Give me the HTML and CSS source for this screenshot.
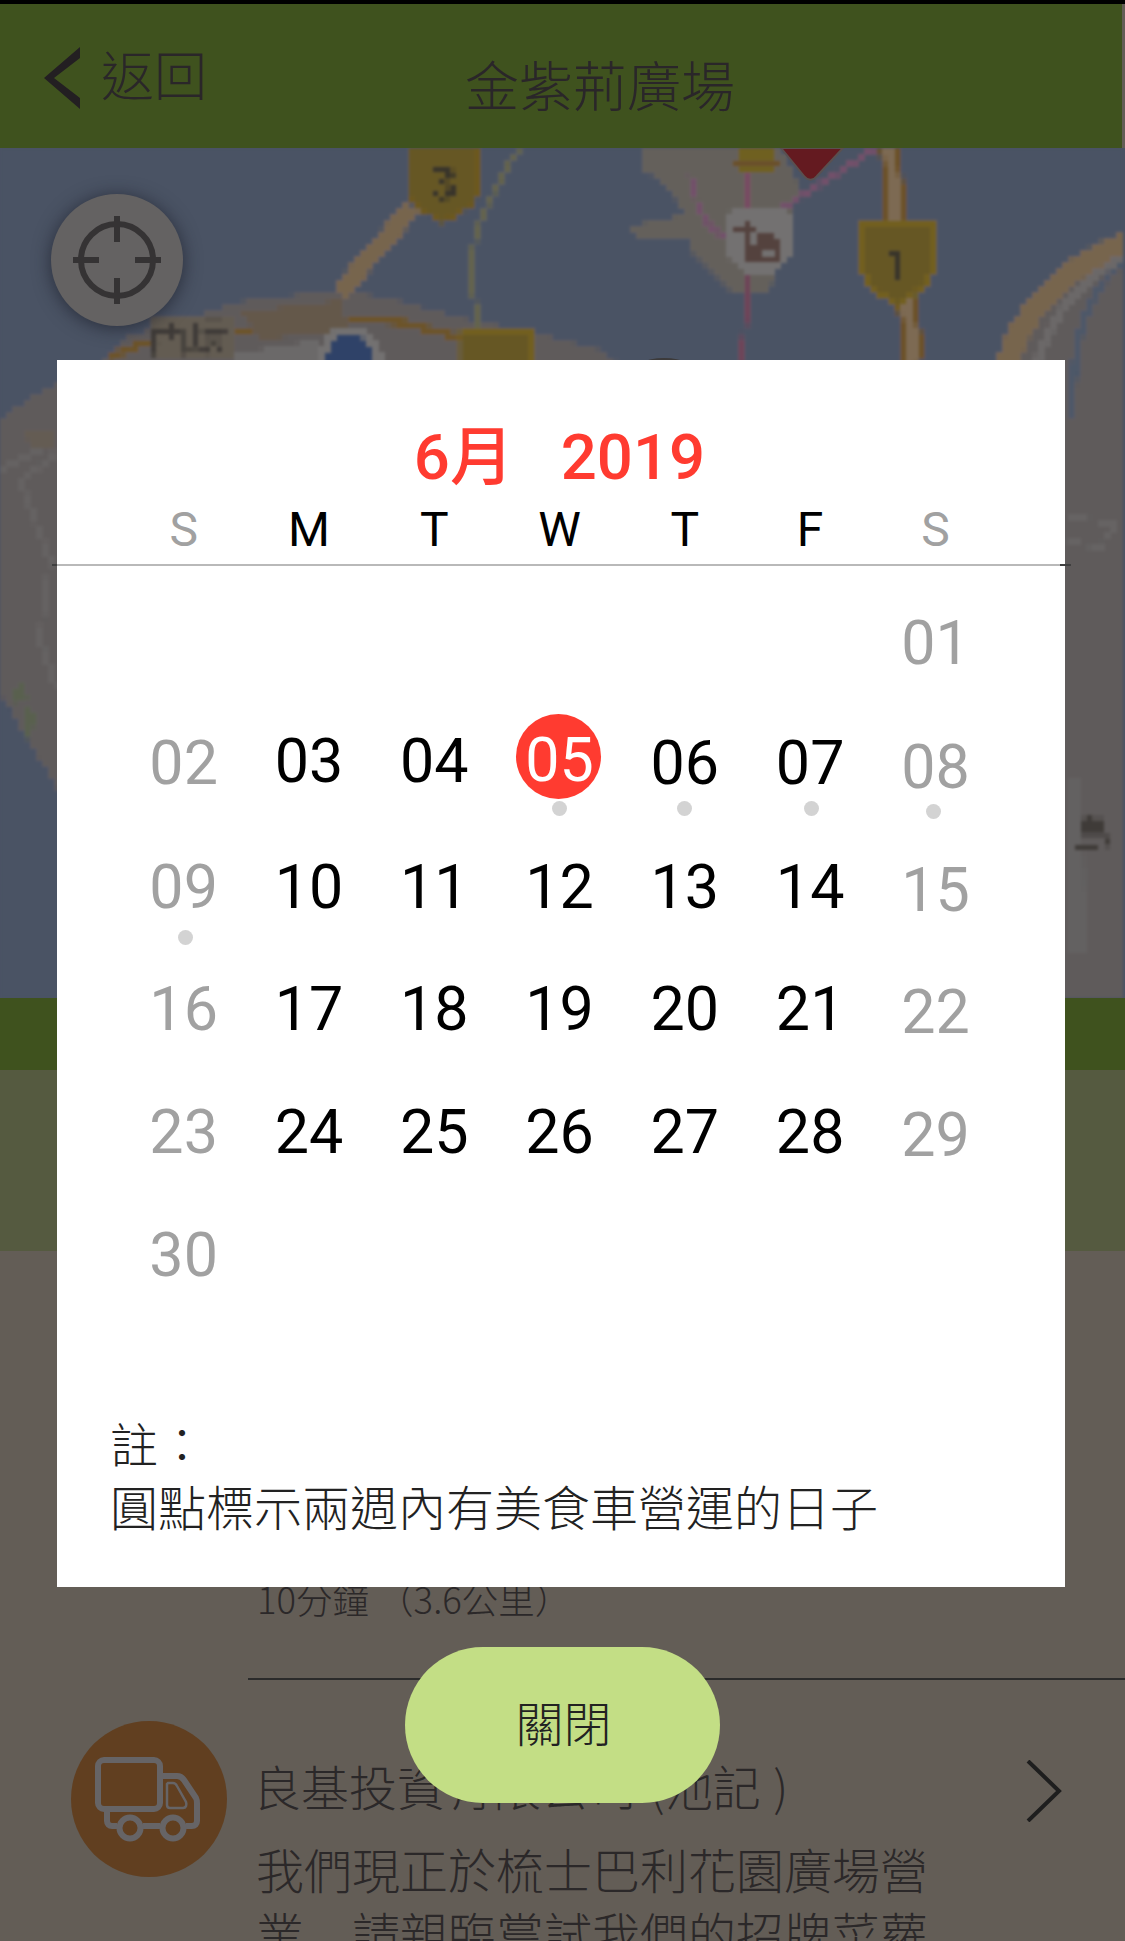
FILE: index.html
```html
<!DOCTYPE html>
<html lang="zh-Hant">
<head>
<meta charset="utf-8">
<title>金紫荊廣場</title>
<link rel="stylesheet" href="styles.css">
</head>
<body>
<div class="screen">
  <div class="statusbar"></div>
  <header class="topbar">
    <div class="back">
      <svg class="back-icon" viewBox="0 0 37 62"><path d="M36 0 L36 11 L10 31 L36 51 L36 62 L0 31 Z"/></svg>
      <span class="back-label">返回</span>
    </div>
    <h1 class="title">金紫荊廣場</h1>
  </header>

  <section class="map">
    <svg class="map-canvas" viewBox="0 0 1125 850" width="1125" height="850">
      <defs>
        <filter id="pixelate" x="0" y="0" width="1125" height="850" filterUnits="userSpaceOnUse" primitiveUnits="userSpaceOnUse" color-interpolation-filters="sRGB">
          <feFlood x="3" y="3" height="1" width="1"/>
          <feComposite width="6" height="6"/>
          <feTile result="grid"/>
          <feComposite in="SourceGraphic" in2="grid" operator="in"/>
          <feMorphology operator="dilate" radius="3"/>
          <feGaussianBlur stdDeviation="1.4"/>
        </filter>
      </defs>
      <g filter="url(#pixelate)">
      <g transform="translate(0 -148)">
        <rect x="0" y="148" width="1125" height="850" fill="#4a5364"/>
        <!-- west land -->
        <path d="M0 420 L30 398 L100 362 L125 338 L240 302 L340 290 L395 300 L460 318 L530 332 L600 350 L640 380 L640 998 L100 998 L57 787 L25 735 L0 692 Z" fill="#5f5b5b"/>
        <path d="M0 470 L50 445 L57 455 L20 480 L50 560 L40 640 L57 690" fill="none" stroke="#656262" stroke-width="5"/>
        <path d="M25 432 L57 428 L57 448 L30 448 Z" fill="#645c53"/>
        <path d="M12 690 L25 682 L28 700 L16 705 Z M25 705 L36 715 L30 745 L24 730 Z" fill="#59604e"/>
        <!-- east land -->
        <path d="M1125 237 C1060 262 1015 310 1000 370 L1000 998 L1125 998 Z" fill="#5f5b5b"/>
        <path d="M1125 243 C1062 268 1018 315 1006 370" fill="none" stroke="#77654d" stroke-width="22"/>
        <path d="M1125 262 C1090 285 1072 330 1072 420" fill="none" stroke="#4d5868" stroke-width="8"/>
        <path d="M1125 256 C1080 280 1045 322 1036 370" fill="none" stroke="#6b6868" stroke-width="8"/>
        <path d="M1066 515 L1115 525 L1100 548 L1066 540" fill="none" stroke="#666363" stroke-width="4"/>
        <path d="M1067 780 L1082 780 L1085 950 L1067 950 Z" fill="#636161"/>
        <!-- west cluster detail -->
        <path d="M413 207 L340 292" fill="none" stroke="#77654d" stroke-width="18"/>
        <path d="M110 360 C125 345 170 335 240 332 L340 318 L400 322 L470 340 L530 355" fill="none" stroke="#6c5429" stroke-width="8"/>
        <path d="M240 312 L340 300 L350 330 L260 340 Z" fill="#64584a"/>
        <path d="M236 354 L320 340 L320 362 L236 362 Z" fill="#6b6969"/>
        <path d="M150 318 H236 V358 H150 Z" fill="#635c52"/>
        <!-- thin olive road -->
        <path d="M518 150 C490 195 470 230 471 280 L480 332" fill="none" stroke="#63634c" stroke-width="5"/>
        <!-- pier cluster -->
        <path d="M640 148 H780 L800 190 L780 250 L770 290 L730 290 L690 250 L690 240 L635 238 L632 226 L685 215 L670 190 L645 170 Z" fill="#64605b"/>
        <path d="M690 175 C700 225 715 232 730 240" fill="none" stroke="#72506a" stroke-width="5"/>
        <path d="M873 150 L780 210 L775 222" fill="none" stroke="#72506a" stroke-width="5"/>
        <path d="M748 170 V240" fill="none" stroke="#774a62" stroke-width="5"/>
        <path d="M740 148 H774 V170 H740 Z" fill="#6f6020"/>
        <path d="M735 165 H780" stroke="#6a502a" stroke-width="5"/>
        <!-- purple line -->
        <path d="M749 275 L742 362" fill="none" stroke="#6d4458" stroke-width="5"/>
        <!-- east road -->
        <path d="M890 148 L896 226" fill="none" stroke="#6b5127" stroke-width="22"/>
        <path d="M890 148 L896 226" fill="none" stroke="#7d6a53" stroke-width="11"/>
        <path d="M907 300 L914 362" fill="none" stroke="#6b5127" stroke-width="22"/>
        <path d="M907 300 L914 362" fill="none" stroke="#7d6a53" stroke-width="11"/>
        <!-- shields -->
        <path d="M408 148 H478 V190 C478 205 455 215 443 222 C431 215 408 205 408 190 Z" fill="#665724" stroke="#6c581d" stroke-width="4"/>
        <text class="tile-num" x="443" y="200" text-anchor="middle">3</text>
        <path d="M863 224 H932 V268 C932 285 908 298 897 305 C886 298 863 285 863 268 Z" fill="#665724" stroke="#725f1e" stroke-width="5"/>
        <text class="tile-num" x="897" y="283" text-anchor="middle">1</text>
        <path d="M462 332 H532 V400 H462 Z" fill="#665724" stroke="#725f1e" stroke-width="5"/>
        <!-- camera -->
        <path d="M724 222 C724 208 745 206 759 206 C775 206 794 208 794 224 V252 C785 265 770 275 759 277 C748 275 732 265 724 252 Z" fill="#737171"/>
        <path d="M734 228 H742 V220 H748 V228 H754 V234 H748 V242 H742 V234 H734 Z M744 264 V244 L756 244 V232 L772 232 L782 240 V264 Z" fill="#54423e"/>
        <rect x="762" y="248" width="10" height="10" fill="#737171"/>
        <!-- blue pin -->
        <path d="M314 372 C318 342 330 326 350 326 C370 326 382 342 386 372 Z" fill="#737171"/>
        <path d="M322 372 C326 348 335 332 350 332 C365 332 373 348 377 372 Z" fill="#2f4268"/>
        <!-- place-name text -->
        <text class="tile-label" x="148" y="352">西環</text>
        <text class="tile-label" x="1072" y="848">島</text>
      </g>
      </g>
      <!-- selected-marker pin above the tiles -->
      <path d="M781 0 H843 L817 28 C813 33 808 33 804 28 Z" fill="#641a20" stroke="#5a5050" stroke-width="2"/>
      <ellipse cx="664" cy="214" rx="18" ry="4" fill="#3c3a3a"/>
    </svg>
    <button class="locate">
      <svg viewBox="0 0 88 88" class="locate-icon">
        <circle cx="44" cy="44" r="36" fill="none" stroke="#353334" stroke-width="6"/>
        <path d="M44 0 V26 M44 62 V88 M0 44 H26 M62 44 H88" stroke="#353334" stroke-width="6" fill="none"/>
      </svg>
    </button>
  </section>

  <div class="strip"></div>
  <div class="band"></div>

  <section class="list">
    <div class="list-item first">
      <p class="distance">10分鐘 （3.6公里）</p>
    </div>
    <div class="rule"></div>
    <div class="list-item truck-item">
      <div class="truck-badge">
        <svg viewBox="0 0 156 156" class="truck-icon">
          <rect x="27" y="39" width="62" height="49" rx="6" fill="none" stroke="#666466" stroke-width="6"/>
          <path d="M92 55 H106 C109 55 111 56 113 59 L125 77 C126 79 126 80 126 82 V100 C126 103 124 105 121 105 H115 M89 105 H72 M36 91 V100 C36 103 38 105 41 105 H46" fill="none" stroke="#666466" stroke-width="6" stroke-linejoin="round"/>
          <path d="M97 62 H102 C104 62 105 63 106 65 L115 81 C116 84 115 87 112 87 H99 C97 87 96 86 96 84 V63 Z" fill="none" stroke="#666466" stroke-width="2.5"/>
          <circle cx="59" cy="107" r="10.5" fill="none" stroke="#666466" stroke-width="6"/>
          <circle cx="102" cy="107" r="10.5" fill="none" stroke="#666466" stroke-width="6"/>
        </svg>
      </div>
      <div class="truck-text">
        <h2 class="item-name">良基投資有限公司 (池記 )</h2>
        <p class="item-desc">我們現正於梳士巴利花園廣場營業<span class="low-punct" lang="zh-Hans">，</span>請親臨嘗試我們的招牌菜蘿</p>
      </div>
      <svg class="item-chevron" viewBox="0 0 36 62"><path d="M2 1 L33 31 L2 61" fill="none" stroke="#1e1e1e" stroke-width="4"/></svg>
    </div>
  </section>

  <div class="dialog">
    <div class="month">6月&nbsp;&nbsp; 2019</div>
    <div class="weekdays">
      <span class="off">S</span><span>M</span><span>T</span><span>W</span><span>T</span><span>F</span><span class="off">S</span>
    </div>
    <div class="days">
      <span></span><span></span><span></span><span></span><span></span><span></span><span class="off d6">01</span>
      <span class="off d3">02</span><span class="d1">03</span><span class="d1">04</span><span class="today"><b>05</b><i class="dot"></i></span><span class="d3">06<i class="dot"></i></span><span class="d3">07<i class="dot dot-r"></i></span><span class="off d7">08<i class="dot dot-l dot-low"></i></span>
      <span class="off d4">09<i class="dot dot-r dot-lower"></i></span><span class="d4">10</span><span class="d4">11</span><span class="d4">12</span><span class="d4">13</span><span class="d4">14</span><span class="off d7">15</span>
      <span class="off d3">16</span><span class="d3">17</span><span class="d3">18</span><span class="d3">19</span><span class="d3">20</span><span class="d3">21</span><span class="off d6">22</span>
      <span class="off d3">23</span><span class="d3">24</span><span class="d3">25</span><span class="d3">26</span><span class="d3">27</span><span class="d3">28</span><span class="off d6">29</span>
      <span class="off d3">30</span>
    </div>
    <div class="note">註：<br>圓點標示兩週內有美食車營運的日子</div>
  </div>
  <button class="close">關閉</button>
</div>
</body>
</html>
```
FILE: styles.css
```css
* { box-sizing: border-box; }
html, body { margin: 0; padding: 0; background: #635d56; }
body { font-family: "Noto Sans CJK TC", "Noto Sans", sans-serif; }
.screen { position: relative; width: 1125px; height: 1941px; overflow: hidden; color: #2b2829; }

.statusbar { height: 4px; background: #000; }
.topbar { display: flex; height: 144px; background: #3f521e; padding-right: 3px; background-clip: content-box; }
.back { display: flex; align-items: flex-start; padding: 43px 0 0 44px; width: 465px; }
.back-icon { width: 37px; height: 62px; fill: #231f22; }
.back-label { margin-top: -4px; font-size: 53px; line-height: 60px; font-weight: 300; margin-left: 20px; color: #2a2629; }
.title { margin: 0; padding-top: 46px; font-size: 54px; line-height: 68px; font-weight: 300; color: #2a2629; white-space: nowrap; }

.map { position: relative; height: 850px; background: #4a5364; }
.map-canvas { display: block; }
.tile-num { font: 700 50px "Liberation Sans", sans-serif; fill: #38342a; }
.tile-label { font: 400 40px "Noto Sans CJK TC", sans-serif; fill: #3f3b38; }
.locate { position: absolute; left: 51px; top: 46px; width: 132px; height: 132px; padding: 0; border: 0; border-radius: 50%; background: #646262; box-shadow: 0 2px 18px rgba(25, 28, 40, .7); display: flex; align-items: center; justify-content: center; }
.locate-icon { width: 88px; height: 88px; }

.strip { height: 72px; background: #3f521e; }
.band { height: 181px; background: #555a40; }

.list { height: 690px; background: #635d56; }
.list-item.first { padding: 328px 0 0 257px; height: 427px; }
.distance { margin: 0; font-size: 36.5px; line-height: 40px; font-weight: 300; color: #2b2829; }
.rule { height: 2px; margin-left: 248px; background: #2b2b2b; }
.truck-item { position: relative; display: flex; padding: 41px 0 0 71px; }
.truck-badge { flex: none; width: 156px; height: 156px; border-radius: 50%; background: #613f20; }
.truck-icon { display: block; width: 156px; height: 156px; }
.truck-text { width: 680px; margin-left: 26px; }
.item-name { margin: 0; padding-top: 33px; font-size: 48px; line-height: 62px; font-weight: 300; color: #2b2829; white-space: nowrap; word-spacing: 2px; }
.item-desc { margin: 20px 0 0; padding-left: 3px; font-size: 48px; line-height: 64px; font-weight: 300; color: #2b2829; }
.low-punct { font-family: "Noto Sans CJK SC", sans-serif; }
.item-chevron { position: absolute; left: 1026px; top: 80px; width: 36px; height: 62px; }

.dialog { position: absolute; left: 57px; top: 360px; width: 1008px; height: 1227px; background: #fff; color: #000; }
.month { padding-top: 62px; height: 140px; text-align: center; font: 500 63.5px/72px Roboto, "Noto Sans CJK TC", sans-serif; color: #ff3b30; padding-right: 3px; }
.weekdays { display: grid; grid-template-columns: repeat(7, 125.3px); padding-left: 64px; height: 65px; font: 400 48px/60px Roboto, sans-serif; text-align: center; position: relative; }
.weekdays::after { content: ""; position: absolute; left: -5px; right: -6px; top: 64px; height: 2px; background: linear-gradient(90deg, #3f3f3f 5px, #b9b9b9 5px, #b9b9b9 1008px, #3f3f3f 1008px); }
.off { color: #a1a1a1; }
.days { display: grid; grid-template-columns: repeat(7, 125.3px); grid-auto-rows: 123px; padding: 37px 0 0 64px; height: 846px; font: 400 61px/70px Roboto, sans-serif; text-align: center; }
.days span { position: relative; }
.d1 { padding-top: 1px; }
.d3 { padding-top: 3px; }
.d4 { padding-top: 4px; }
.d6 { padding-top: 6px; }
.d7 { padding-top: 7px; }
.today b { position: relative; font-weight: 400; color: #fff; }
.today::before { content: ""; position: absolute; left: 19px; top: -11px; width: 85px; height: 85px; border-radius: 50%; background: #ff3b30; }
.dot { position: absolute; left: 55px; top: 76px; width: 15px; height: 15px; border-radius: 50%; background: #d3d3d3; }
.dot-r { left: 57px; }
.dot-l { left: 53px; }
.dot-low { top: 79px; }
.dot-lower { top: 82px; }
.note { padding: 0 0 0 53px; font-size: 48px; line-height: 63px; font-weight: 300; color: #222; white-space: nowrap; }

.close { position: absolute; left: 405px; top: 1647px; width: 315px; height: 156px; padding: 0 0 8px 2px; border: 0; border-radius: 78px; background: #c3de85; font: 300 48px/60px "Noto Sans CJK TC", sans-serif; color: #222; }
```
